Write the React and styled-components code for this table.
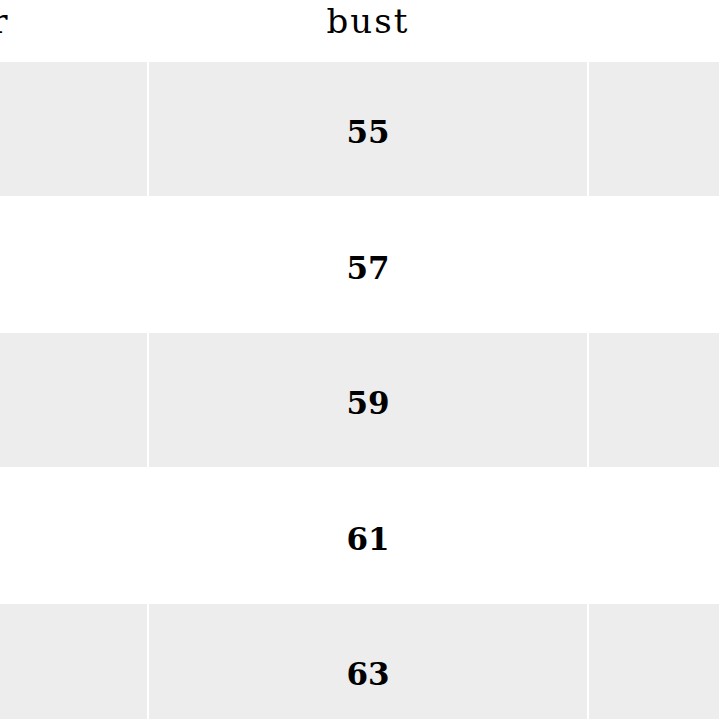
import React from "react";
import styled, { createGlobalStyle } from "styled-components";

const Global = createGlobalStyle`
  html, body {
    margin: 0;
    padding: 0;
    background: #ffffff;
    overflow: hidden;
  }
  body {
    width: 719px;
    height: 719px;
    font-family: "DejaVu Serif", "Liberation Serif", serif;
    color: #000;
  }
`;

const Viewport = styled.div`
  width: 719px;
  height: 719px;
  overflow: hidden;
`;

const Table = styled.div`
  display: grid;
  grid-template-columns: 372px 438px 300px;
  grid-auto-rows: 133.5px;
  grid-template-rows: 60px;
  gap: 2px;
  margin-left: -225px;
  background: #ffffff;
`;

const HeadCell = styled.div`
  display: flex;
  justify-content: center;
  align-items: flex-start;
  padding-top: 1px;
  font-size: 34px;
  line-height: 40px;
  letter-spacing: 2px;
  white-space: nowrap;
`;

const Cell = styled.div`
  display: flex;
  justify-content: center;
  align-items: center;
  background: ${(p) => (p.$shaded ? "#ecedec" : "#ffffff")};
  font-size: 31px;
  font-weight: bold;
  padding-top: 7px;
`;

const rows = [55, 57, 59, 61, 63];

export default function App() {
  return (
    <Viewport>
      <Global />
      <Table>
        <HeadCell>color</HeadCell>
        <HeadCell>bust</HeadCell>
        <HeadCell></HeadCell>
        {rows.map((v, i) => (
          <React.Fragment key={v}>
            <Cell $shaded={i % 2 === 0}></Cell>
            <Cell $shaded={i % 2 === 0}>{v}</Cell>
            <Cell $shaded={i % 2 === 0}></Cell>
          </React.Fragment>
        ))}
      </Table>
    </Viewport>
  );
}
